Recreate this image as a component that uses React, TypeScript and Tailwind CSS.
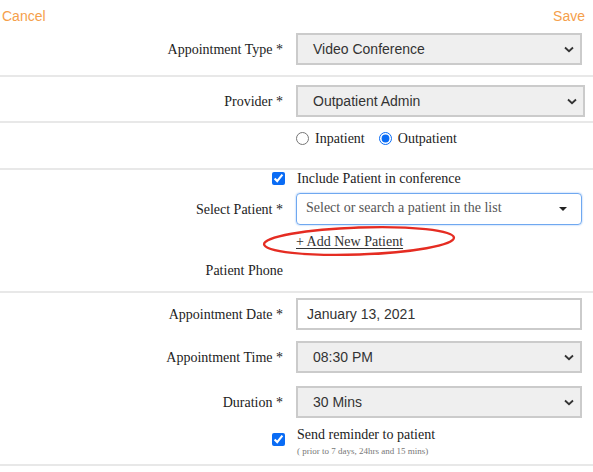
import React from 'react'

const Chevron = () => (
    <svg width="10" height="7" viewBox="0 0 10 7" className="text-[#333]">
        <path d="M1 1.5 L5 5.2 L9 1.5" fill="none" stroke="currentColor" strokeWidth="1.8" />
    </svg>
)

const Label = ({ children }: { children: React.ReactNode }) => (
    <div className="w-[283px] shrink-0 text-right font-['Liberation_Serif',serif] text-[14px] text-[#222]">
        {children}
    </div>
)

const FakeSelect = ({ value }: { value: string }) => (
    <div className="w-[286px] h-[32px] flex items-center justify-between border-2 border-[#cbcbcb] bg-[#efefef] pl-[15px] pr-[6px] font-['Liberation_Sans',Arial,sans-serif] text-[14px] text-[#333]">
        <span>{value}</span>
        <Chevron />
    </div>
)

const Divider = () => <div className="h-[2px] bg-[#e8e8e8]" />

const Check = () => (
    <input type="checkbox" defaultChecked className="w-[13px] h-[13px] m-0 accent-[#0a6cf5]" />
)

const App = () => {
    return (
        <div className="w-[593px] h-[472px] bg-white overflow-hidden font-['Liberation_Serif',serif]">
            {/* Top bar */}
            <div className="flex justify-between items-center h-[33px] pl-[2px] pr-[8px] pb-[1px] font-['Liberation_Sans',Arial,sans-serif] text-[14px] text-[#f5a04b]">
                <span>Cancel</span>
                <span>Save</span>
            </div>

            {/* Appointment type */}
            <div className="flex items-center gap-[13px] h-[32px]">
                <Label>Appointment Type *</Label>
                <FakeSelect value="Video Conference" />
            </div>
            <div className="h-[10px]" />
            <Divider />

            {/* Provider */}
            <div className="flex items-center gap-[13px] h-[32px] mt-[8px]">
                <Label>Provider *</Label>
                <div className="w-[289px] h-[32px] flex items-center justify-between border-2 border-[#cbcbcb] bg-[#efefef] pl-[15px] pr-[6px] font-['Liberation_Sans',Arial,sans-serif] text-[14px] text-[#333]">
                    <span>Outpatient Admin</span>
                    <Chevron />
                </div>
            </div>
            <div className="h-[4px]" />
            <Divider />

            {/* Inpatient / outpatient */}
            <div className="flex items-center h-[45px] pl-[296px] pb-[15px] text-[14px] text-[#222]">
                <label className="flex items-center gap-[6px]">
                    <input type="radio" name="pt" className="w-[13px] h-[13px] m-0 accent-[#0a6cf5]" />
                    <span>Inpatient</span>
                </label>
                <label className="flex items-center gap-[6px] ml-[14px]">
                    <input type="radio" name="pt" defaultChecked className="w-[13px] h-[13px] m-0 accent-[#0a6cf5]" />
                    <span>Outpatient</span>
                </label>
            </div>
            <Divider />

            {/* Patient section */}
            <div className="flex items-center h-[16px] pl-[272px] text-[14px] text-[#222]">
                <Check />
                <span className="ml-[12px]">Include Patient in conference</span>
            </div>
            <div className="flex items-center gap-[13px] h-[32px] mt-[7px]">
                <Label>Select Patient *</Label>
                <div className="w-[286px] h-[32px] flex items-center justify-between border border-[#6fa8f0] rounded-[4px] shadow-[0_0_2px_#8ab8f5] pl-[9px] pr-[14px] pb-[4px] text-[14px] text-[#555]">
                    <span>Select or search a patient in the list</span>
                    <span className="w-0 h-0 border-l-[4px] border-r-[4px] border-t-[4px] border-l-transparent border-r-transparent border-t-[#222] mt-[4px]" />
                </div>
            </div>
            <div className="h-[32px] flex items-center pl-[296px]">
                <span className="relative text-[14px] text-[#333] underline underline-offset-2">
                    + Add New Patient
                    <svg className="absolute left-[-34px] top-[-5px] -rotate-2" width="194" height="30" viewBox="0 0 194 30">
                        <ellipse cx="97" cy="15" rx="95" ry="13.5" fill="none" stroke="#e52c22" strokeWidth="2.4" />
                    </svg>
                </span>
            </div>
            <div className="flex items-center h-[26px]">
                <Label>Patient Phone</Label>
            </div>
            <div className="h-[8px]" />
            <Divider />

            {/* Date / time */}
            <div className="flex items-center gap-[13px] h-[32px] mt-[5px]">
                <Label>Appointment Date *</Label>
                <div className="w-[286px] h-[32px] flex items-center border-2 border-[#cbcbcb] bg-white pl-[9px] font-['Liberation_Sans',Arial,sans-serif] text-[14px] text-[#333]">
                    January 13, 2021
                </div>
            </div>
            <div className="flex items-center gap-[13px] h-[32px] mt-[11px]">
                <Label>Appointment Time *</Label>
                <FakeSelect value="08:30 PM" />
            </div>
            <div className="flex items-center gap-[13px] h-[32px] mt-[13px]">
                <Label>Duration *</Label>
                <FakeSelect value="30 Mins" />
            </div>
            <div className="flex items-start mt-[8px] pl-[272px] text-[#222]">
                <div className="pt-[3px]">
                    <Check />
                </div>
                <div className="ml-[12px] flex flex-col">
                    <span className="text-[14px] leading-[18px]">Send reminder to patient</span>
                    <span className="text-[9px] leading-[14px] text-[#777]">( prior to 7 days, 24hrs and 15 mins)</span>
                </div>
            </div>
            <div className="h-[6px]" />
            <Divider />
        </div>
    )
}
export default App
